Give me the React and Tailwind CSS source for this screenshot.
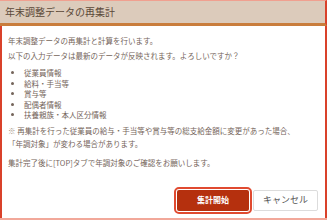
export default function App() {
    return (
        <div className="w-[327px] h-[221px] bg-white text-[#74645a]" style={{ fontFamily: '"Noto Sans CJK JP", "Noto Sans", sans-serif' }}>
            <div className="w-[327px] h-[220px] flex flex-col border-b-2 border-[#f2a89a]">
                {/* header */}
                <div className="h-[26px] shrink-0 bg-[#dccbbb] border-t border-[#f0a090] border-b-[3px] border-b-[#c97d3c] border-r-2 border-r-[#d9412a] flex items-center pl-[5px]">
                    <h1 className="text-[10px] leading-none text-[#5a4838]">年末調整データの再集計</h1>
                </div>

                {/* body */}
                <div className="flex-1 border-l-2 border-r-2 border-[#d9412a] pl-[6px] pr-[7px] pt-[10px] text-[7.5px] leading-[10px]">
                    <p>年末調整データの再集計と計算を行います。</p>
                    <p className="mt-[5px]">以下の入力データは最新のデータが反映されます。よろしいですか？</p>
                    <ul className="mt-[7px] list-disc pl-[16px] leading-[10.5px]">
                        <li>従業員情報</li>
                        <li>給料・手当等</li>
                        <li>賞与等</li>
                        <li>配偶者情報</li>
                        <li>扶養親族・本人区分情報</li>
                    </ul>
                    <p className="mt-[5px]"><span className="text-[#a09080]">※</span> 再集計を行った従業員の給与・手当等や賞与等の総支給金額に変更があった場合、</p>
                    <p className="mt-[3px]">「年調対象」が変わる場合があります。</p>
                    <p className="mt-[9px]">集計完了後に[TOP]タブで年調対象のご確認をお願いします。</p>

                    <div className="mt-[19px] flex justify-end items-center gap-[1px]">
                        <div className="border-2 border-[#e04a30] rounded-[5px] p-[1px]">
                            <button className="w-[72px] h-[21px] bg-[#b5300e] text-white text-[8px] font-bold rounded-[2px] flex items-center justify-center">
                                集計開始
                            </button>
                        </div>
                        <button className="w-[65px] h-[21px] bg-white border border-[#dcdcdc] rounded-[2px] text-[9px] text-[#555] flex items-center justify-center">
                            キャンセル
                        </button>
                    </div>
                </div>
            </div>
        </div>
    )
}
